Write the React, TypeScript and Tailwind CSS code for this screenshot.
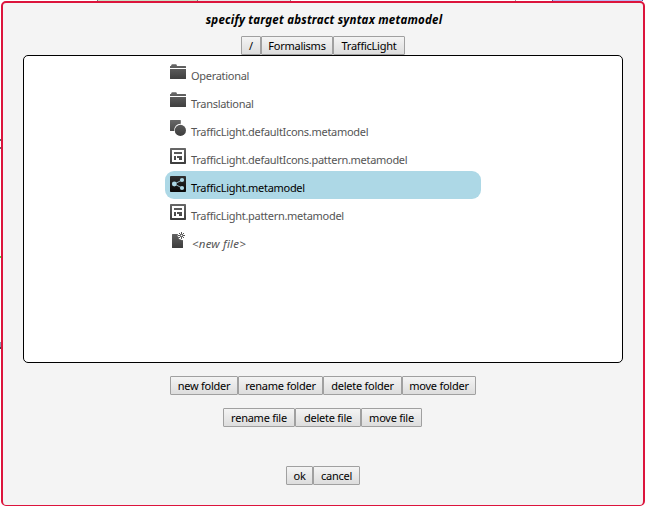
import type { ReactNode } from "react";

type IconKind = "folder" | "shapes" | "pattern" | "graph" | "new";

function FileIcon({ kind }: { kind: IconKind }) {
  const fill = `url(#shade-${kind})`;
  return (
    <svg className="block h-4 w-4 shrink-0" viewBox="0 0 16 16">
      <defs>
        <linearGradient id={`shade-${kind}`} gradientUnits="userSpaceOnUse" x1="0" y1="0" x2="0" y2="16">
          <stop offset="0" stopColor={kind === "graph" ? "#303030" : "#686868"} />
          <stop offset="1" stopColor={kind === "graph" ? "#080808" : "#3c3c3c"} />
        </linearGradient>
      </defs>
      {kind === "folder" && (
        <g fill={fill}>
          <path d="M0 4V2.3Q0 2 .5 2H1L1.6.6Q1.8.2 2.3.2H5.8Q6.3.2 6.5.6L7 2h8.5q.5 0 .5.5V4z" />
          <path d="M0 5h16v9.5q0 .5-.5.5H.5q-.5 0-.5-.5z" />
        </g>
      )}
      {kind === "shapes" && (
        <g fill={fill}>
          <path d="M.5 0h9.8q.5 0 .5.5v3.2A6.5 6.5 0 0 0 4.2 11H.5q-.5 0-.5-.5V.5Q0 0 .5 0z" />
          <circle cx="10.4" cy="10.4" r="5.6" />
        </g>
      )}
      {kind === "pattern" && (
        <g fill={fill}>
          <path fillRule="evenodd" d="M.7 0h14.6q.7 0 .7.7v14.6q0 .7-.7.7H.7q-.7 0-.7-.7V.7Q0 0 .7 0zM2 2v12h12V2z" />
          <path d="M4 4h8v2H4zM4 8h2v4H4zM7 8h5v4H9V10H7z" />
        </g>
      )}
      {kind === "graph" && (
        <g>
          <rect width="16" height="16" rx=".8" fill={fill} />
          <path d="M12 4 4.5 8l7.5 4" fill="none" stroke="#add8e6" strokeWidth=".8" />
          <g fill="#add8e6">
            <circle cx="4.3" cy="8" r="2.4" />
            <circle cx="12" cy="4" r="2.1" />
            <circle cx="12" cy="12" r="2.1" />
          </g>
        </g>
      )}
      {kind === "new" && (
        <g fill={fill}>
          <path d="M2.5 2H8L7.5 4 9 5.4 8.7 7l2 .4L12 8.3l1-.3v7.5q0 .5-.5.5h-10q-.5 0-.5-.5v-13q0-.5.5-.5z" />
          <path d="M11.5 0v7M8 3.5h7M9 1l5 5M14 1 9 6" stroke="#555" strokeWidth="1" />
          <circle cx="11.5" cy="3.5" r="1.8" fill="#666" />
          <circle cx="11.5" cy="3.5" r=".8" fill="#fff" />
        </g>
      )}
    </svg>
  );
}

function Button({ width, children }: { width: string; children: ReactNode }) {
  return (
    <button
      className={`${width} h-[19px] shrink-0 rounded-[1px] border border-[#a0a0a0] bg-linear-to-b from-[#f4f4f4] to-[#dddddd] text-center leading-[17px] tracking-[-0.25px] whitespace-nowrap text-black`}
    >
      {children}
    </button>
  );
}

const files: { kind: IconKind; name: string; selected?: boolean }[] = [
  { kind: "folder", name: "Operational" },
  { kind: "folder", name: "Translational" },
  { kind: "shapes", name: "TrafficLight.defaultIcons.metamodel" },
  { kind: "pattern", name: "TrafficLight.defaultIcons.pattern.metamodel" },
  { kind: "graph", name: "TrafficLight.metamodel", selected: true },
  { kind: "pattern", name: "TrafficLight.pattern.metamodel" },
  { kind: "new", name: "<new file>" },
];

export default function App() {
  return (
    <div className="h-[506px] w-[645px] overflow-hidden bg-white font-['Noto_Sans',sans-serif] text-[11px]">
      <div className="flex h-px">
        <div className="ml-[97px] w-[101px] border-x border-[#777777] bg-[#c8dfc4]" />
        <div className="w-[93px] border-r border-[#888888] bg-[#e6e6e6]" />
        <div className="w-[225px] border-r border-[#999999]" />
        <div className="ml-[36px] w-[91px] border-x border-[#55559a] bg-[#b9b9f0]" />
      </div>
      <div className="flex">
        <div className="w-px shrink-0">
          <div className="mt-[138px] h-[2px] bg-[#666666]" />
          <div className="mt-[6px] h-[2px] bg-[#666666]" />
          <div className="mt-[107px] h-[2px] bg-[#4bd34b]" />
          <div className="mt-[84px] h-[5px] bg-[#8c96ab]" />
          <div className="h-[2px] bg-[#444444]" />
        </div>
        <div className="flex h-[505px] w-[644px] flex-col items-center rounded-[5px] border-2 border-b border-[#dc143c] bg-[#f4f4f4]">
          <h1 className="mt-[9px] h-[24px] pl-[2px] text-[11.5px] leading-[16px] font-bold tracking-[0.22px] whitespace-nowrap text-black italic">
            specify target abstract syntax metamodel
          </h1>
          <div className="flex">
            <Button width="w-[20px]">/</Button>
            <Button width="w-[72px]">Formalisms</Button>
            <Button width="w-[72px]">TrafficLight</Button>
          </div>
          <div className="h-[308px] w-[600px] shrink-0 rounded-[5px] border border-black bg-white pt-[3px] pl-[141px]">
            {files.map((file) => (
              <div
                key={file.name}
                className={`flex h-7 w-[316px] gap-[5px] rounded-[9px] pt-[5px] pl-[5px] whitespace-nowrap ${file.selected ? "bg-[#add8e6] text-black" : "text-[#555555]"}`}
              >
                <FileIcon kind={file.kind} />
                <span
                  className={`pt-[4px] leading-[16px] ${file.kind === "new" ? "pl-px text-[11.5px] tracking-[0.2px] italic" : "tracking-[-0.29px]"}`}
                >
                  {file.name}
                </span>
              </div>
            ))}
          </div>
          <div className="mt-[13px] flex">
            <Button width="w-[68px]">new folder</Button>
            <Button width="w-[85px]">rename folder</Button>
            <Button width="w-[79px]">delete folder</Button>
            <Button width="w-[74px]">move folder</Button>
          </div>
          <div className="mt-[13px] mr-px flex">
            <Button width="w-[72px]">rename file</Button>
            <Button width="w-[66px]">delete file</Button>
            <Button width="w-[61px]">move file</Button>
          </div>
          <div className="mt-[39px] flex">
            <Button width="w-[27px]">ok</Button>
            <Button width="w-[47px]">cancel</Button>
          </div>
        </div>
      </div>
    </div>
  );
}
